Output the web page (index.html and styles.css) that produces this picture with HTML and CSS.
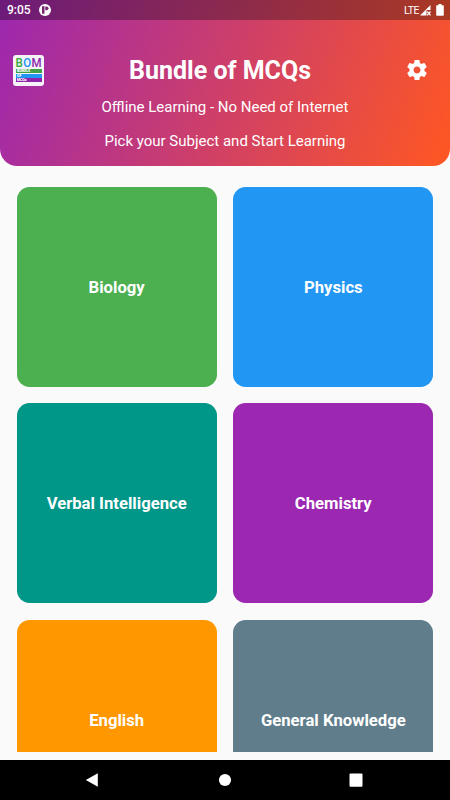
FILE: index.html
```html
<!DOCTYPE html>
<html lang="en">
<head>
    <meta charset="UTF-8">
    <meta name="viewport" content="width=device-width, initial-scale=1.0">
    <title>Bundle of MCQs</title>
    <link rel="stylesheet" href="styles.css">
</head>
<body>
    <header class="header">
        <div class="status-bar">
            <span class="time">9:05</span>
            <svg class="app-dot" viewBox="0 0 12 12">
                <circle cx="6" cy="6" r="6" fill="#fff"/>
                <path d="M3 2.200h2.500v7.500H3z" fill="#76256f"/>
                <path d="M6.300 2.400h1.200a1.900 1.900 0 0 1 0 3.900H6.300z" fill="#76256f"/>
            </svg>
            <span class="lte">LTE</span>
            <svg class="signal" viewBox="0 0 11 11">
                <path d="M10.500 0v5H6.500v5.500H0z" fill="#fff"/>
                <path d="M7.200 6.500l3.300 3.800M10.500 6.500L7.200 10.300" stroke="#fff" stroke-width="1.200"/>
            </svg>
            <svg class="battery" viewBox="0 0 8 12">
                <path d="M2.500 0h3v1.200H7a.8.8 0 0 1 .8.8v9a.8.8 0 0 1-.8.8H1a.8.8 0 0 1-.8-.8V2a.8.8 0 0 1 .8-.8h1.500z" fill="#fff"/>
            </svg>
        </div>

        <div class="title-row">
            <div class="logo">
                <div class="logo-name"><span class="b">B</span><span class="o">O</span><span class="m">M</span></div>
                <div class="logo-bar green">BUNDLE</div>
                <div class="logo-bar blue">OF</div>
                <div class="logo-bar purple">MCQs</div>
            </div>
            <h1 class="title">Bundle of MCQs</h1>
            <svg class="settings" viewBox="0 0 24 24">
                <path fill="#fff" d="M19.430 12.980c.040-.320.070-.640.070-.980s-.030-.660-.070-.980l2.110-1.650c.190-.150.240-.420.120-.640l-2-3.460c-.120-.220-.390-.300-.610-.220l-2.490 1c-.520-.400-1.080-.730-1.690-.980l-.380-2.650C14.460 2.180 14.250 2 14 2h-4c-.250 0-.460.180-.490.420l-.380 2.650c-.610.250-1.170.590-1.690.980l-2.490-1c-.230-.090-.490 0-.610.220l-2 3.460c-.130.220-.070.490.120.640l2.110 1.650c-.040.320-.070.650-.070.980s.030.660.070.980l-2.110 1.650c-.190.150-.240.420-.120.640l2 3.460c.120.220.390.300.610.220l2.490-1c.520.400 1.080.730 1.690.980l.380 2.650c.030.240.240.420.490.420h4c.250 0 .460-.180.490-.420l.380-2.650c.610-.250 1.170-.590 1.690-.980l2.490 1c.230.090.490 0 .610-.220l2-3.460c.120-.220.070-.490-.120-.640l-2.110-1.650zM12 15.500c-1.930 0-3.500-1.570-3.500-3.500s1.570-3.500 3.500-3.500 3.500 1.570 3.500 3.500-1.570 3.500-3.500 3.500z"/>
            </svg>
        </div>
        <p class="subtitle">Offline Learning - No Need of Internet</p>
        <p class="subtitle">Pick your Subject and Start Learning</p>
    </header>

    <main class="subjects">
        <div class="card biology">Biology</div>
        <div class="card physics">Physics</div>
        <div class="card verbal">Verbal Intelligence</div>
        <div class="card chemistry">Chemistry</div>
        <div class="card english">English</div>
        <div class="card general">General Knowledge</div>
    </main>

    <nav class="nav-bar">
        <svg viewBox="0 0 14 14"><path d="M.8 7L12.800.2v13.600z" fill="#fff"/></svg>
        <svg viewBox="0 0 14 14"><circle cx="7" cy="7" r="6.100" fill="#fff"/></svg>
        <svg viewBox="0 0 14 14"><rect x=".5" y=".4" width="13" height="13.400" rx="1" fill="#fff"/></svg>
    </nav>
</body>
</html>
```

FILE: styles.css
```css
/* Basic reset */
* {
    margin: 0;
    padding: 0;
    box-sizing: border-box;
}

body {
    font-family: Roboto, sans-serif;
    background-color: #fafafa;
    color: #fff;
    display: flex;
    flex-direction: column;
    height: 100vh;
    overflow: hidden;
}

.header {
    height: 166px;
    flex-shrink: 0;
    background: linear-gradient(110.25deg, #9c27b0, #ff5722);
    border-radius: 0 0 17px 17px;
    text-align: center;
}

.status-bar {
    height: 20px;
    display: flex;
    align-items: center;
    padding: 0 6px 0 7px;
    background-color: rgba(0, 0, 0, 0.3);
}

.time {
    font-size: 12px;
    font-weight: 500;
    width: 31.500px;
    text-align: left;
}

.app-dot {
    width: 12px;
    height: 12px;
}

.lte {
    font-size: 10.500px;
    letter-spacing: -0.5px;
    margin-left: auto;
    margin-right: 1px;
}

.signal {
    width: 11px;
    height: 11px;
    margin-right: 5px;
}

.battery {
    width: 8px;
    height: 12px;
}

.title-row {
    display: flex;
    align-items: center;
    justify-content: space-between;
    padding: 0 21px 0 13px;
    height: 30px;
    margin-top: 35px;
    margin-bottom: 13px;
}

.logo {
    width: 31px;
    height: 31px;
    background-color: #f5f3f7;
    border-radius: 3px;
    padding: 3.500px 2.500px 0;
    overflow: hidden;
}

.logo-name {
    display: flex;
    justify-content: space-between;
    height: 11px;
    font-size: 11.500px;
    line-height: 11px;
    font-weight: 500;
    transform: scaleY(1.1);
}

.b {
    color: #35a83a;
}

.o {
    color: #2196f3;
}

.m {
    color: #8e24aa;
}

.logo-bar {
    height: 4px;
    margin-bottom: 0.5px;
    padding-left: 1.500px;
    font-size: 3.500px;
    line-height: 4px;
    font-weight: 900;
    text-align: left;
}

.green {
    background-color: #43a047;
}

.blue {
    background-color: #2196f3;
}

.purple {
    background-color: #8e24aa;
}

.title {
    font-size: 25px;
    line-height: 30px;
    font-weight: 700;
    padding-top: 2px;
    margin-right: 9px;
}

.settings {
    width: 24px;
    height: 24px;
}

.subtitle {
    font-size: 15px;
    line-height: 18px;
    margin-bottom: 16px;
}

.subjects {
    display: grid;
    grid-template-columns: 200px 200px;
    grid-auto-rows: 200px;
    gap: 16.670px;
    height: 565px;
    margin: 20.500px 16.670px 0;
    overflow: hidden;
}

.card {
    display: flex;
    align-items: center;
    justify-content: center;
    padding-top: 1px;
    border-radius: 12.500px;
    font-size: 16.670px;
    font-weight: 700;
}

.biology {
    background-color: #4caf50;
}

.physics {
    background-color: #2196f3;
}

.verbal {
    background-color: #009688;
}

.chemistry {
    background-color: #9c27b0;
}

.english {
    background-color: #ff9800;
}

.general {
    background-color: #607d8b;
}

.nav-bar {
    display: flex;
    align-items: center;
    justify-content: space-between;
    height: 40px;
    margin-top: auto;
    padding: 0 87px 0 85px;
    background-color: #000;
}

.nav-bar svg {
    width: 14px;
    height: 14px;
}

.nav-bar svg:nth-child(2) {
    margin-left: 1px;
}
```
